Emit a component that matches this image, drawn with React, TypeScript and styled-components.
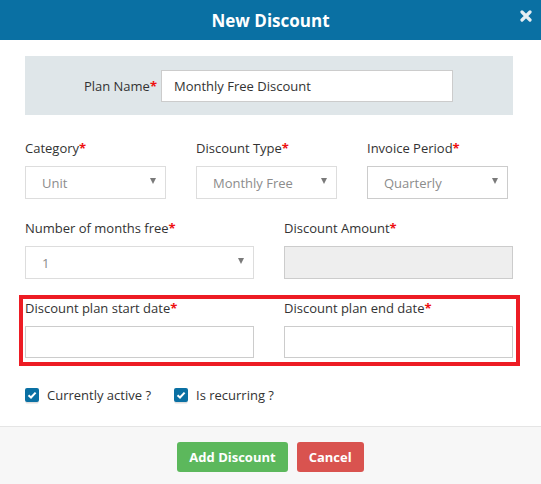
import React from "react";
import styled, { createGlobalStyle } from "styled-components";

const GlobalStyle = createGlobalStyle`
  html, body {
    margin: 0;
    padding: 0;
    background: #ffffff;
    font-family: "Open Sans", "Liberation Sans", sans-serif;
    color: #333333;
  }
  * {
    box-sizing: border-box;
  }
`;

const Modal = styled.div`
  width: 541px;
  height: 484px;
  display: flex;
  flex-direction: column;
  background: #ffffff;
`;

const Header = styled.div`
  position: relative;
  height: 40px;
  background: #0a70a3;
  display: flex;
  align-items: center;
  justify-content: center;
`;

const Title = styled.h4`
  margin: 0;
  font-size: 17px;
  font-weight: 700;
  color: #ffffff;
  line-height: 37px;
`;

const Close = styled.button`
  position: absolute;
  right: 8px;
  top: 9px;
  width: 14px;
  height: 14px;
  padding: 0;
  border: none;
  background: transparent;
  display: flex;
  align-items: center;
  justify-content: center;
`;

const Body = styled.div`
  flex: 1;
  padding: 16px 28px 0 25px;
`;

const PlanPanel = styled.div`
  height: 59px;
  background: #dfe6e9;
  display: grid;
  grid-template-columns: 132px 292px;
  column-gap: 4px;
  align-items: center;
`;

const PanelLabel = styled.label`
  text-align: right;
  font-size: 13px;
  color: #333333;
`;

const Req = styled.span`
  color: #ee1111;
  font-weight: 700;
`;

const TextInput = styled.div<{ $disabled?: boolean }>`
  height: ${(p) => (p.$disabled ? 33 : 32)}px;
  border: 1px solid #cccccc;
  background: ${(p) => (p.$disabled ? "#eeeeee" : "#ffffff")};
  font-size: 13px;
  color: #333333;
  display: flex;
  align-items: center;
  padding: 0 12px;
`;

const Row = styled.div<{ $cols: string; $top: number }>`
  display: grid;
  grid-template-columns: ${(p) => p.$cols};
  column-gap: 30px;
  margin-top: ${(p) => p.$top}px;
`;

const Highlight = styled.div`
  margin: 16px -7px 0 -6px;
  padding: 0 3px 4px 2px;
  border: 4px solid #ed1c24;
`;

const Field = styled.div`
  display: flex;
  flex-direction: column;
`;

const FieldLabel = styled.label`
  font-size: 13px;
  line-height: 18px;
  color: #333333;
  margin-bottom: 9px;
`;

const Select = styled.div<{ $dark?: boolean }>`
  height: 33px;
  border: 1px solid ${(p) => (p.$dark ? "#cccccc" : "#dddddd")};
  background: #ffffff;
  display: flex;
  align-items: center;
  justify-content: space-between;
  padding: 0 9px 0 16px;
  font-size: 13px;
  color: #8c8c8c;
`;

const Caret = styled.span`
  width: 0;
  height: 0;
  border-left: 3.5px solid transparent;
  border-right: 3.5px solid transparent;
  border-top: 6px solid #7a7a7a;
  margin-top: -3px;
`;

const Checks = styled.div`
  display: flex;
  align-items: center;
  gap: 23px;
  margin-top: 20px;
`;

const CheckItem = styled.label`
  display: flex;
  align-items: center;
  gap: 8px;
  font-size: 13px;
  color: #333333;
`;

const Box = styled.span`
  width: 14px;
  height: 14px;
  border-radius: 2px;
  background: #0a70a3;
  box-shadow: 0 2px 0 -0.5px #dddddd;
  display: flex;
  align-items: center;
  justify-content: center;
`;

const Footer = styled.div`
  height: 58px;
  border-top: 1px solid #e5e5e5;
  background: #f7f7f7;
  display: flex;
  justify-content: center;
  gap: 9px;
  padding-top: 15px;
`;

const Button = styled.button<{ $variant: "success" | "danger" }>`
  height: 30px;
  padding: 0 12px;
  border: none;
  border-radius: 3px;
  background: ${(p) => (p.$variant === "success" ? "#5cb85c" : "#d9534f")};
  color: #ffffff;
  font-family: "Open Sans", "Liberation Sans", sans-serif;
  font-size: 13px;
  font-weight: 700;
`;

const Label = ({ text }: { text: string }) => (
  <>
    {text}
    <Req>*</Req>
  </>
);

const Check = ({ text }: { text: string }) => (
  <CheckItem>
    <Box>
      <svg width="10" height="10" viewBox="0 0 10 10">
        <path d="M1.5 5.2 L4 7.5 L8.6 2.6" fill="none" stroke="#ffffff" strokeWidth="2" />
      </svg>
    </Box>
    {text}
  </CheckItem>
);

const App = () => {
  return (
    <Modal>
      <GlobalStyle />
      <Header>
        <Title>New Discount</Title>
        <Close aria-label="close">
          <svg width="12" height="12" viewBox="0 0 12 12">
            <path d="M2 2 L10 10 M10 2 L2 10" stroke="#e6eef3" strokeWidth="3.2" strokeLinecap="round" />
          </svg>
        </Close>
      </Header>
      <Body>
        <PlanPanel>
          <PanelLabel>
            <Label text="Plan Name" />
          </PanelLabel>
          <TextInput>Monthly Free Discount</TextInput>
        </PlanPanel>

        <Row $cols="141px 141px 141px" $top={24}>
          <Field>
            <FieldLabel>
              <Label text="Category" />
            </FieldLabel>
            <Select>
              Unit
              <Caret />
            </Select>
          </Field>
          <Field>
            <FieldLabel>
              <Label text="Discount Type" />
            </FieldLabel>
            <Select>
              Monthly Free
              <Caret />
            </Select>
          </Field>
          <Field>
            <FieldLabel>
              <Label text="Invoice Period" />
            </FieldLabel>
            <Select $dark>
              Quarterly
              <Caret />
            </Select>
          </Field>
        </Row>

        <Row $cols="229px 229px" $top={20}>
          <Field>
            <FieldLabel>
              <Label text="Number of months free" />
            </FieldLabel>
            <Select>
              1
              <Caret />
            </Select>
          </Field>
          <Field>
            <FieldLabel>
              <Label text="Discount Amount" />
            </FieldLabel>
            <TextInput $disabled />
          </Field>
        </Row>

        <Highlight>
          <Row $cols="229px 229px" $top={0}>
            <Field>
              <FieldLabel>
                <Label text="Discount plan start date" />
              </FieldLabel>
              <TextInput />
            </Field>
            <Field>
              <FieldLabel>
                <Label text="Discount plan end date" />
              </FieldLabel>
              <TextInput />
            </Field>
          </Row>
        </Highlight>

        <Checks>
          <Check text="Currently active ?" />
          <Check text="Is recurring ?" />
        </Checks>
      </Body>
      <Footer>
        <Button $variant="success">Add Discount</Button>
        <Button $variant="danger">Cancel</Button>
      </Footer>
    </Modal>
  );
};

export default App;
